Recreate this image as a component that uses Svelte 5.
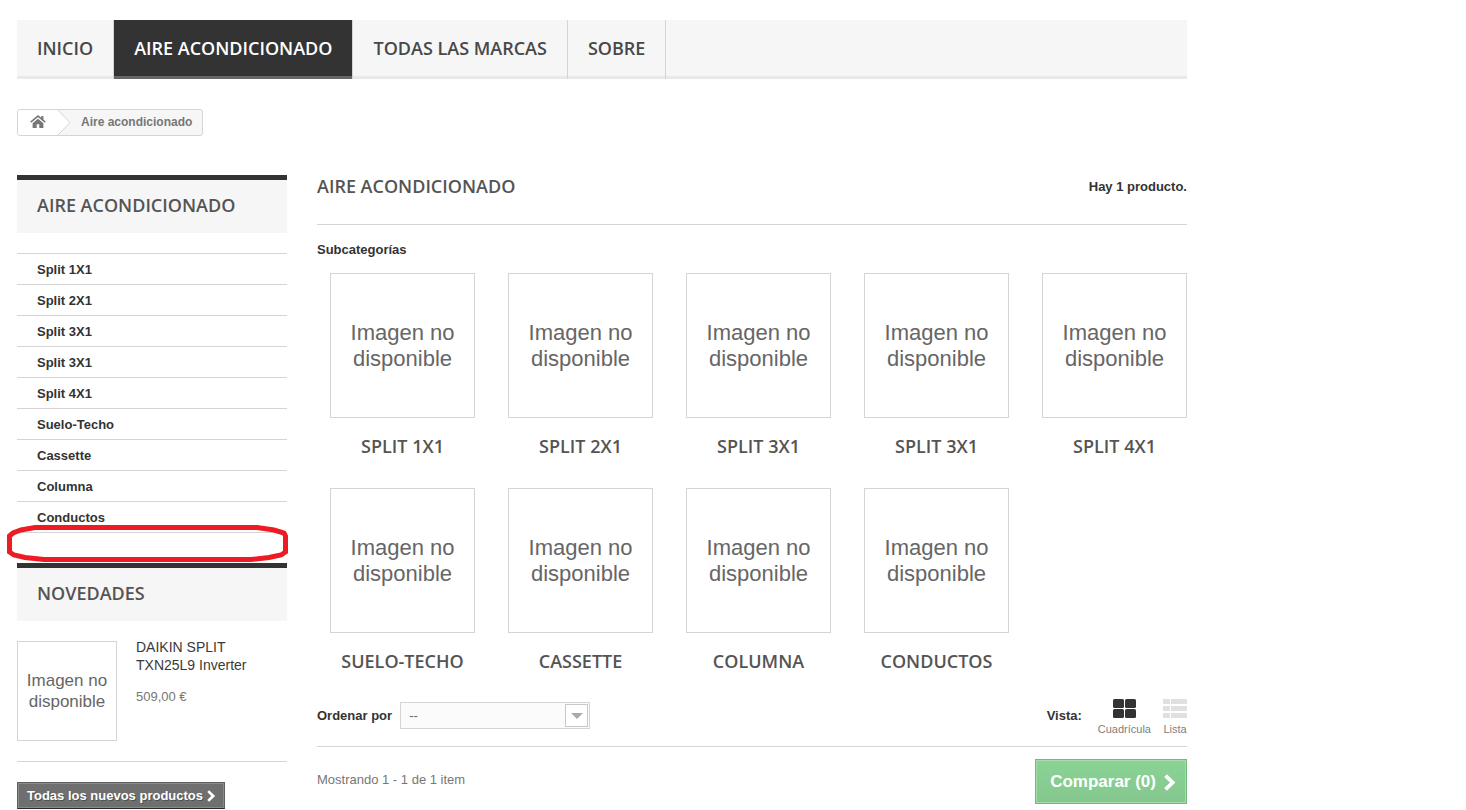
<script>
  const menu = ['Inicio', 'Aire acondicionado', 'Todas las marcas', 'Sobre'];
  const categories = [
    'Split 1X1', 'Split 2X1', 'Split 3X1', 'Split 3X1', 'Split 4X1',
    'Suelo-Techo', 'Cassette', 'Columna', 'Conductos'
  ];
  let active = $state(1);
  let order = $state('');
</script>

{#snippet chevron(size)}
  <svg class="chevron" width={size} height={size} viewBox="0 0 12 12" aria-hidden="true">
    <path d="M3.2 1.1 8.2 6l-5 4.9" fill="none" stroke="currentColor" stroke-width="2.7" />
  </svg>
{/snippet}

<div class="page">
  <nav class="menu">
    {#each menu as item, i}
      <a href="#menu" class:active={i === active} onclick={() => (active = i)}>{item}</a>
    {/each}
  </nav>

  <div class="breadcrumb">
    <a class="home" href="#inicio" aria-label="Inicio">
      <svg width="16" height="14" viewBox="0 0 16 14" aria-hidden="true">
        <path d="M8 3.7 2.6 8.2v4.3q0 .5.5.5h3.6V9.3h2.6V13h3.6q.5 0 .5-.5V8.2z" fill="currentColor" />
        <path d="M.7 7.2 8 1.1l7.300 6.1" fill="none" stroke="currentColor" stroke-width="1.5" />
        <path d="M11.2 1h2.200v4.700l-2.200-1.800z" fill="currentColor" />
      </svg>
    </a>
    <svg class="arrow" width="13" height="25" viewBox="0 0 13 25" aria-hidden="true">
      <path d="M0 0 12 12.5 0 25z" fill="#fff" />
      <path d="M0 0 12 12.5 0 25" fill="none" stroke="#d6d4d4" />
    </svg>
    <span>Aire acondicionado</span>
  </div>

  <div class="columns">
    <aside>
      <section class="block">
        <h2>Aire acondicionado</h2>
        <ul class="tree">
          {#each categories as name}
            <li><a href="#categoria">{name}</a></li>
          {/each}
        </ul>
        <svg class="mark" viewBox="0 0 281 37" aria-hidden="true">
          <path d="M28 2.5H250L267 5 277 8 278.500 11V27L274 30 262 32.500 244 34.500H37L18 32.500 7 30 2.500 27V11L6 8 14 5z" />
        </svg>
      </section>

      <section class="block">
        <h2>Novedades</h2>
        <div class="product">
          <a class="thumb small" href="#producto">Imagen no disponible</a>
          <div>
            <h3><a href="#producto">DAIKIN SPLIT TXN25L9 Inverter</a></h3>
            <p>509,00 €</p>
          </div>
        </div>
        <div class="more">
          <a href="#novedades">Todas los nuevos productos {@render chevron(12)}</a>
        </div>
      </section>
    </aside>

    <main>
      <header>
        <h1>Aire acondicionado</h1>
        <strong>Hay 1 producto.</strong>
      </header>

      <p class="subtitle">Subcategorías</p>
      <ul class="grid">
        {#each categories as name}
          <li>
            <a class="thumb" href="#categoria">Imagen no disponible</a>
            <h3><a href="#categoria">{name}</a></h3>
          </li>
        {/each}
      </ul>

      <div class="toolbar">
        <label for="order">Ordenar por</label>
        <div class="select">
          <select id="order" bind:value={order}>
            <option value="">--</option>
          </select>
          <i></i>
        </div>
        <span class="view">Vista:</span>
        <button class="mode on">
          <svg width="24" height="20" viewBox="0 0 24 20" aria-hidden="true">
            <g fill="currentColor">
              <rect x="1" width="11" height="9" rx="1.500" />
              <rect x="13" width="11" height="9" rx="1.500" />
              <rect x="1" y="10" width="11" height="9" rx="1.500" />
              <rect x="13" y="10" width="11" height="9" rx="1.500" />
            </g>
          </svg>
          Cuadrícula
        </button>
        <button class="mode">
          <svg width="24" height="20" viewBox="0 0 24 20" aria-hidden="true">
            <path d="M0 0h7v5H0zM8 0h16v5H8zM0 7h7v5H0zM8 7h16v5H8zM0 14h7v5H0zM8 14h16v5H8z" fill="currentColor" />
          </svg>
          Lista
        </button>
      </div>

      <footer>
        <span>Mostrando 1 - 1 de 1 item</span>
        <button class="compare">Comparar (0) {@render chevron(17)}</button>
      </footer>
    </main>
  </div>
</div>

<style>
  :global(body) {
    margin: 0;
    background: #fff;
  }
  .page {
    box-sizing: border-box;
    max-width: 1187px;
    padding: 20px 0 0 17px;
    font: 13px/18px "Liberation Sans", Arial, sans-serif;
    color: #777;
  }
  a {
    color: inherit;
    text-decoration: none;
  }
  h1, h2, h3, p, ul {
    margin: 0;
    padding: 0;
  }
  ul {
    list-style: none;
  }
  h1, h2, .menu, .grid h3 {
    font: 600 18px/22px "Open Sans", sans-serif;
    text-transform: uppercase;
    color: #555454;
  }
  .menu {
    display: flex;
    background: #f6f6f6;
    box-shadow: inset 0 -3px #e9e9e9;
  }
  .menu a {
    padding: 17px 20px 20px;
    border-right: 1px solid #d6d4d4;
    color: #484848;
  }
  .menu a.active {
    background: #333;
    color: #fff;
    box-shadow: inset 0 -3px #666;
  }
  .breadcrumb {
    display: inline-flex;
    align-items: center;
    height: 25px;
    margin-top: 30px;
    border: 1px solid #d6d4d4;
    border-radius: 3px;
    background: #f6f6f6;
    overflow: hidden;
    font-size: 12px;
    font-weight: bold;
    vertical-align: top;
  }
  .home {
    display: flex;
    align-items: center;
    justify-content: center;
    width: 40px;
    height: 100%;
    background: #fff;
  }
  .home svg {
    margin-bottom: 2px;
  }
  .breadcrumb span {
    padding: 0 10px 2px;
  }
  .columns {
    display: flex;
    gap: 30px;
    margin-top: 39px;
  }
  aside {
    flex: none;
    width: 270px;
  }
  .block {
    position: relative;
    margin-bottom: 30px;
  }
  .block:last-child {
    margin-bottom: 0;
  }
  h2 {
    padding: 14px 20px 17px;
    border-top: 5px solid #333;
    background: #f6f6f6;
  }
  .tree {
    margin-top: 20px;
    border-top: 1px solid #d6d4d4;
  }
  .tree a {
    display: block;
    padding: 7px 20px 5px;
    border-bottom: 1px solid #d6d4d4;
    font-weight: bold;
    color: #333;
  }
  .mark {
    position: absolute;
    left: -10px;
    bottom: -29px;
    width: 281px;
    height: 37px;
    pointer-events: none;
  }
  .mark path {
    fill: none;
    stroke: #ed1c24;
    stroke-width: 5;
  }
  .thumb {
    box-sizing: border-box;
    display: flex;
    align-items: center;
    width: 145px;
    height: 145px;
    padding: 0 16px;
    border: 1px solid #d6d4d4;
    text-align: center;
    font-size: 22px;
    line-height: 26px;
    color: #666;
  }
  .thumb.small {
    flex: none;
    width: 100px;
    height: 100px;
    padding: 0 4px;
    font-size: 17px;
    line-height: 21px;
  }
  .product {
    display: flex;
    gap: 19px;
    padding: 20px 0;
    border-bottom: 1px solid #d6d4d4;
  }
  .product h3 {
    max-width: 120px;
    margin-top: -3px;
    font-size: 14px;
    font-weight: normal;
    color: #3a3939;
  }
  .product p {
    margin-top: 14px;
  }
  .more {
    display: flex;
    margin-top: 20px;
  }
  .more a {
    display: flex;
    align-items: center;
    gap: 2px;
    padding: 4px 7px 3px 9px;
    border: 1px solid #5f5f5f;
    border-bottom-color: #2b2b2b;
    background: #6f6f6f;
    box-shadow: inset 0 0 0 1px #8b8a8a;
    font-weight: bold;
    color: #fff;
    text-shadow: 1px 1px rgba(0, 0, 0, 0.3);
  }
  main {
    flex: 1;
    min-width: 0;
  }
  header {
    display: flex;
    justify-content: space-between;
    padding-bottom: 27px;
    border-bottom: 1px solid #d6d4d4;
    color: #333;
  }
  header strong {
    padding-top: 3px;
  }
  .subtitle {
    margin: 16px 0 14px;
    font-weight: bold;
    color: #333;
  }
  .grid {
    display: grid;
    grid-template-columns: repeat(5, 145px);
    justify-content: space-between;
    row-gap: 31px;
    padding-left: 13px;
  }
  .grid h3 {
    margin-top: 17px;
    text-align: center;
  }
  .toolbar {
    display: flex;
    align-items: center;
    margin-top: 27px;
    padding-bottom: 10px;
    border-bottom: 1px solid #d6d4d4;
    font-weight: bold;
    color: #333;
  }
  .toolbar label, .select, .view {
    margin-bottom: 4px;
  }
  .select {
    position: relative;
    margin-left: 8px;
  }
  select {
    display: block;
    appearance: none;
    width: 190px;
    height: 27px;
    padding: 0 8px;
    border: 1px solid #d6d4d4;
    border-radius: 0;
    background: #fbfbfb;
    font: 13px "Liberation Sans", Arial, sans-serif;
    color: #666;
  }
  .select i {
    position: absolute;
    top: 2px;
    right: 2px;
    display: grid;
    place-items: center;
    width: 21px;
    height: 21px;
    border: 1px solid #c8c8c8;
    background: #fff;
    pointer-events: none;
  }
  .select i::after {
    content: "";
    border: 6px solid transparent;
    border-top-color: #aaa;
    border-bottom: 0;
  }
  button {
    border: 0;
    background: none;
    cursor: pointer;
    font: 11px/14px "Liberation Sans", Arial, sans-serif;
  }
  .view {
    margin-left: auto;
    margin-right: 16px;
  }
  .mode {
    display: flex;
    flex-direction: column;
    align-items: center;
    gap: 3px;
    padding: 0;
    color: #808080;
  }
  .mode + .mode {
    margin-left: 12px;
  }
  .mode svg {
    color: #e1e0e0;
  }
  .mode.on svg {
    color: #333;
  }
  footer {
    display: flex;
    align-items: center;
    justify-content: space-between;
    padding-top: 12px;
  }
  footer span {
    margin-bottom: 4px;
  }
  .compare {
    display: flex;
    align-items: center;
    gap: 5px;
    padding: 12px 8px 11px 14px;
    border: 1px solid #74b87e;
    background: linear-gradient(#89d394, #85c78f);
    box-shadow: inset 0 0 0 1px #a6dcad;
    font-size: 17px;
    font-weight: bold;
    line-height: 20px;
    color: #fff;
  }
</style>
